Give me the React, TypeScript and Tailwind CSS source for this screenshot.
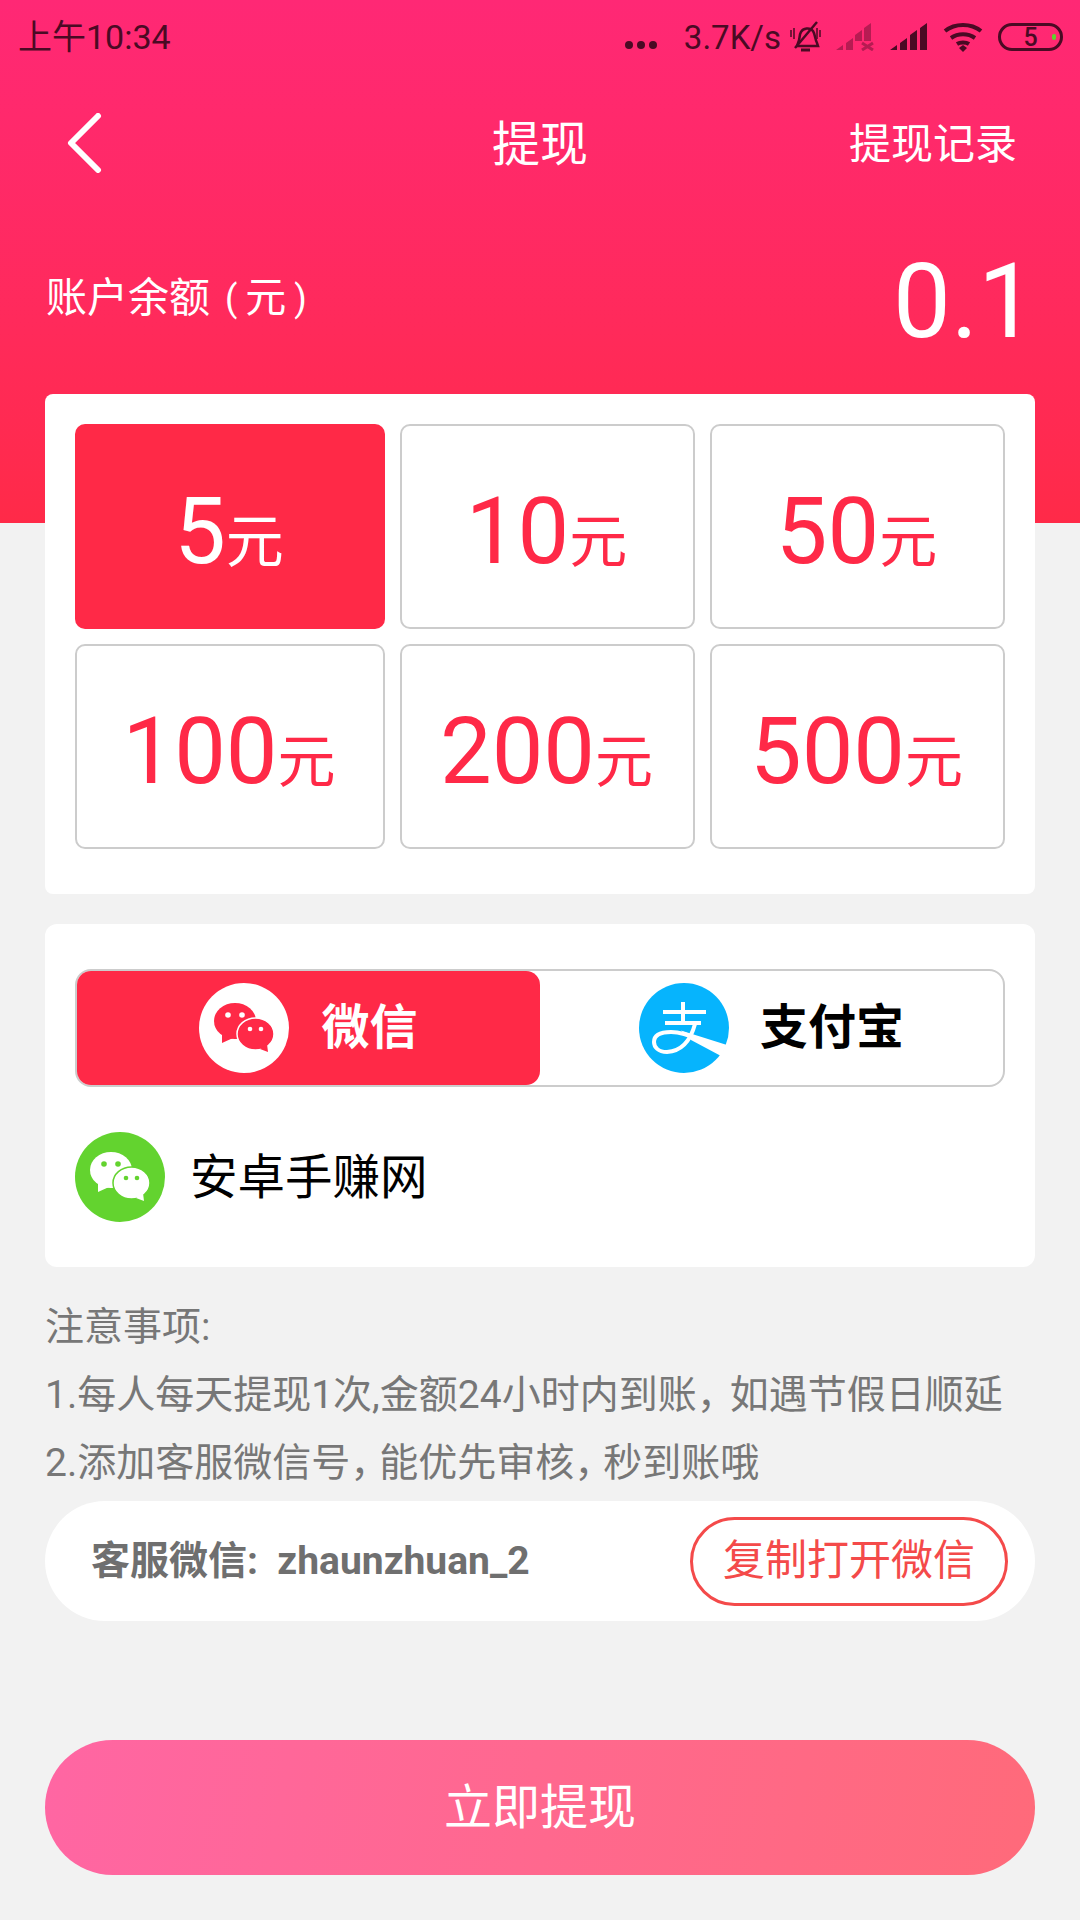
const font = { fontFamily: '"Roboto", "Noto Sans CJK SC", sans-serif' };

function WeChatIcon({ bg, fg }: { bg: string; fg: string }) {
  return (
    <svg width="90" height="90" viewBox="0 0 90 90">
      <circle cx="45" cy="45" r="45" fill={bg} />
      <ellipse cx="36" cy="38" rx="21" ry="18" fill={fg} />
      <path d="M23 50v10l11-5z" fill={fg} />
      <ellipse cx="56.500" cy="51" rx="18.500" ry="16" fill={fg} stroke={bg} strokeWidth="1.500" />
      <path d="M61 66l8 3-1-8z" fill={fg} />
      <circle cx="29" cy="32" r="2.800" fill={bg} />
      <circle cx="43" cy="32" r="2.800" fill={bg} />
      <circle cx="51" cy="46" r="2.300" fill={bg} />
      <circle cx="62" cy="46" r="2.300" fill={bg} />
    </svg>
  );
}

function AlipayIcon() {
  return (
    <svg width="90" height="90" viewBox="0 0 90 90">
      <circle cx="45" cy="45" r="45" fill="#06b4fd" />
      <path d="M24 29h43M44 19v21M26 40h36" stroke="#fff" strokeWidth="4" fill="none" />
      <path d="M56 41C52 56 44 68 28 69 19 69 15 64 15 59 15 52 22 49 32 49 42 49 50 52 60 57" stroke="#fff" strokeWidth="4" fill="none" />
      <path d="M42 47.500L88 62 82 73 52 57z" fill="#fff" />
    </svg>
  );
}

function StatusIcons() {
  return (
    <div className="flex items-center">
      <div className="flex gap-[4px] mr-[27px] mt-[16px]">
        <span className="w-[8px] h-[8px] rounded-full bg-[#4a0a24]" />
        <span className="w-[8px] h-[8px] rounded-full bg-[#4a0a24]" />
        <span className="w-[8px] h-[8px] rounded-full bg-[#4a0a24]" />
      </div>
      <span className="text-[33px] leading-none text-[#4a0a24] mr-[8px]">3.7K/s</span>
      <svg width="33" height="32" viewBox="0 0 33 32" className="mr-[14px]" fill="none" stroke="#4a0a24" strokeWidth="2.500">
        <path d="M9 22c2-3 1-8 3-11 2-4 9-5 12-1 2 3 2 8 4 12l1 3H8z" />
        <path d="M12 29h9" strokeWidth="3" />
        <path d="M28 1L6 27" />
        <path d="M2 9v7M5 7v11M28 7v11M31 9v7" strokeWidth="1.500" />
      </svg>
      <svg width="40" height="28" viewBox="0 0 40 28" className="mr-[14px]" fill="#4a0a24" opacity=".4">
        <path d="M0 27l7-5v5zM10 20l7-5v12h-7zM19 12l7-5v11h-7zM28 5l7-5v18h-7z" />
        <path d="M26 20l11 7M37 20l-11 7" stroke="#4a0a24" strokeWidth="3" />
      </svg>
      <svg width="38" height="28" viewBox="0 0 38 28" className="mr-[15px]" fill="#4a0a24">
        <path d="M0 27l7-5v5zM10 20l7-5v12h-7zM20 12l7-5v20h-7zM30 5l7-5v27h-7z" />
      </svg>
      <svg width="40" height="30" viewBox="0 0 40 30" className="mr-[15px]" fill="none" stroke="#4a0a24" strokeWidth="4">
        <path d="M2 9c10-8 26-8 36 0M8 16c7-5 17-5 24 0M14 22c3-2 9-2 12 0" />
        <path d="M16 26l4-3 4 3-4 4z" fill="#4a0a24" stroke="none" />
      </svg>
      <div className="relative w-[65px] h-[28px] rounded-[14px] border-[3px] border-[#4a0a24] flex items-center justify-center">
        <span className="text-[25px] leading-none font-medium text-[#4a0a24]">5</span>
        <span className="absolute right-[4px] top-[8px] w-[4px] h-[6px] rounded-full bg-[#5fd32d]" />
      </div>
    </div>
  );
}

function Amount({ value, active, wide }: { value: string; active?: boolean; wide?: boolean }) {
  return (
    <div
      className={`h-[205px] ${wide ? "w-[310px]" : "w-[295px]"} rounded-[10px] flex items-center justify-center pt-[10px] pr-[2px] ${
        active ? "bg-[#ff2947] text-white" : "bg-white border-2 border-[#cccccc] text-[#ff2947]"
      }`}
    >
      <span className="text-[92px] leading-none">{value}</span>
      <span className="text-[58px] leading-none mt-[20px]">元</span>
    </div>
  );
}

export default function App() {
  return (
    <div style={font} className="relative w-[1080px] h-[1920px] bg-[#f2f2f2] overflow-hidden">
      <div className="h-[523px] bg-gradient-to-b from-[#ff2875] to-[#ff2a48] text-white">
        <div className="h-[74px] flex items-center justify-between pl-[18px] pr-[17px]">
          <span className="text-[34px] leading-none text-[#4a0a24]">上午10:34</span>
          <StatusIcons />
        </div>
        <div className="relative h-[66px] mt-[38px] flex items-center justify-center">
          <svg width="36" height="60" viewBox="0 0 36 60" className="absolute left-[66px] top-[1px]" fill="none" stroke="#fff" strokeWidth="6" strokeLinecap="round" strokeLinejoin="round">
            <path d="M32 3L5 30l27 27" />
          </svg>
          <span className="text-[48px] leading-none">提现</span>
          <span className="absolute right-[63px] text-[42px] leading-none">提现记录</span>
        </div>
        <div className="flex items-start justify-between pl-[46px] pr-[44px] mt-[70px]">
          <span className="flex items-center text-[41px] leading-none mt-[30px]">
            账户余额
            <span className="ml-[15px] text-[36px]">(</span>
            <span className="ml-[8px]">元</span>
            <span className="ml-[8px] text-[36px]">)</span>
          </span>
          <span className="text-[103px] leading-none mt-[2px]">0.1</span>
        </div>
      </div>

      {/* cards overlap the header, the page is pulled up by margin */}
      <div className="-mt-[129px] px-[45px]">
        <div className="h-[500px] bg-white rounded-[8px] p-[30px] flex flex-col gap-[15px]">
          <div className="flex justify-between">
            <Amount value="5" active wide />
            <Amount value="10" />
            <Amount value="50" />
          </div>
          <div className="flex justify-between">
            <Amount value="100" wide />
            <Amount value="200" />
            <Amount value="500" />
          </div>
        </div>

        <div className="h-[343px] mt-[30px] bg-white rounded-[12px] px-[30px] pt-[45px]">
          <div className="h-[118px] rounded-[16px] border-2 border-[#cccccc] flex">
            <div className="w-[463px] bg-[#ff2947] rounded-[14px] flex items-center justify-center gap-[32px] text-white">
              <WeChatIcon bg="#ffffff" fg="#ff2947" />
              <span className="text-[48px] leading-none font-bold">微信</span>
            </div>
            <div className="flex-1 flex items-center justify-center gap-[31px] text-black">
              <AlipayIcon />
              <span className="text-[48px] leading-none font-bold">支付宝</span>
            </div>
          </div>
          <div className="flex items-center gap-[25px] mt-[45px]">
            <WeChatIcon bg="#63d32f" fg="#ffffff" />
            <span className="text-[47.500px] leading-none text-black mt-[3px]">安卓手赚网</span>
          </div>
        </div>

        <div className="mt-[26px] text-[39px] leading-[68px] text-[#777777] whitespace-nowrap">
          <p className="h-[68px]">注意事项:</p>
          <p className="h-[68px]">
            1.每人每天提现1次,金额24小时内到账<span className="tracking-[-6px]">，</span>如遇节假日顺延
          </p>
          <p className="h-[68px]">
            2.添加客服微信号<span className="tracking-[-10px]">，</span>能优先审核<span className="tracking-[-10px]">，</span>秒到账哦
          </p>
        </div>

        <div className="h-[120px] mt-[4px] bg-white rounded-[60px] flex items-center justify-between pl-[46px] pr-[27px]">
          <span className="text-[39px] leading-none font-bold text-[#6f6f6f] whitespace-pre">客服微信:  zhaunzhuan_2</span>
          <button className="w-[318px] h-[89px] rounded-[45px] border-[3px] border-[#f44a4a] text-[#f44a4a] text-[42px] leading-none">
            复制打开微信
          </button>
        </div>

        <button className="w-full h-[135px] mt-[119px] rounded-[68px] bg-[linear-gradient(100deg,#ff66a3,#ff6a7a)] text-white text-[48px] leading-none">
          立即提现
        </button>
      </div>
    </div>
  );
}
